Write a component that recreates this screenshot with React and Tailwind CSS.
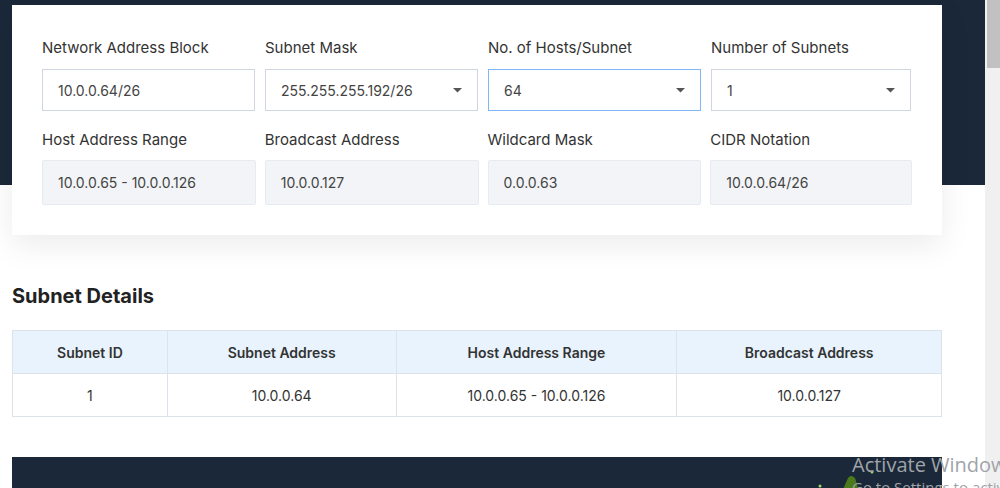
import React from 'react';

const Caret = () => (
  <svg width="9" height="5" viewBox="0 0 9 5" className="shrink-0">
    <path d="M0 0h9L4.5 4.5z" fill="#555" />
  </svg>
);

const Field = ({ label, value, kind, w = 'w-[213px]', focus }) => (
  <div className={w}>
    <div className="text-[15px] leading-5 text-[#333] mb-[11px]">{label}</div>
    <div
      className={`h-[42px] flex items-center justify-between px-[15px] bg-white border ${
        focus ? 'border-[#7fb6f5]' : 'border-[#cfd6e0]'
      }`}
    >
      <span className="text-[14px] text-[#444]">{value}</span>
      {kind === 'select' && <Caret />}
    </div>
  </div>
);

const ReadOnly = ({ label, value, w = 'w-[214px]' }) => (
  <div className={w}>
    <div className="text-[15px] leading-5 text-[#333] mb-[10px]">{label}</div>
    <div className="h-[45px] flex items-center px-[15px] bg-[#f2f4f7] border border-[#e6ebf2] rounded-[2px]">
      <span className="text-[14px] text-[#444]">{value}</span>
    </div>
  </div>
);

const cols = ['w-[155px]', 'w-[229px]', 'w-[281px]', 'w-[265px]'];

export default function App() {
  return (
    <div
      className="relative flex h-[488px] w-[1000px] overflow-hidden"
      style={{ fontFamily: 'Inter, "Noto Sans", sans-serif' }}
    >
      <div className="flex-1 bg-[linear-gradient(to_bottom,#1a2839_0,#1a2839_185px,#ffffff_185px)] pt-[5px]">
        {/* calculator card */}
        <div className="ml-3 w-[930px] bg-white px-[30px] pt-[33px] pb-[30px] shadow-[0_10px_30px_rgba(0,0,0,0.08)]">
          <div className="flex gap-[10px]">
            <Field label="Network Address Block" value="10.0.0.64/26" />
            <Field label="Subnet Mask" value="255.255.255.192/26" kind="select" />
            <Field label="No. of Hosts/Subnet" value="64" kind="select" focus />
            <Field label="Number of Subnets" value="1" kind="select" w="w-[200px]" />
          </div>
          <div className="flex gap-[9px] mt-[19px]">
            <ReadOnly label="Host Address Range" value="10.0.0.65 - 10.0.0.126" />
            <ReadOnly label="Broadcast Address" value="10.0.0.127" />
            <ReadOnly label="Wildcard Mask" value="0.0.0.63" />
            <ReadOnly label="CIDR Notation" value="10.0.0.64/26" w="w-[202px]" />
          </div>
        </div>

        {/* subnet details */}
        <h2 className="ml-3 mt-[49px] text-[20px] leading-6 font-bold text-[#222]">Subnet Details</h2>
        <table className="ml-3 mt-[22px] w-[930px] border-collapse text-[14px] text-center">
          <thead>
            <tr className="bg-[#e9f3fe] h-[43px]">
              {['Subnet ID', 'Subnet Address', 'Host Address Range', 'Broadcast Address'].map((h, i) => (
                <th key={h} className={`${cols[i]} border border-[#dde3ea] font-semibold text-[#333]`}>
                  {h}
                </th>
              ))}
            </tr>
          </thead>
          <tbody>
            <tr className="h-[43px]">
              {['1', '10.0.0.64', '10.0.0.65 - 10.0.0.126', '10.0.0.127'].map((c, i) => (
                <td key={i} className={`${cols[i]} border border-[#dde3ea] text-[#333]`}>
                  {c}
                </td>
              ))}
            </tr>
          </tbody>
        </table>

        {/* footer band */}
        <div className="ml-3 mt-[40px] w-[930px] h-[40px] bg-[#1a2839] relative overflow-hidden">
          <svg className="absolute left-[806px] top-[12px]" width="56" height="32" viewBox="0 0 56 32">
            <circle cx="2" cy="17" r="1.5" fill="#9fd46b" />
            <circle cx="54" cy="3" r="1.5" fill="#9fd46b" />
            <path d="M20 32 L30 9 Q33 5 37 9 L44 32 Z" fill="#4a7a1a" />
          </svg>
        </div>
      </div>

      {/* scrollbar */}
      <div className="w-[15px] bg-[#f0f0f0]">
        <div className="ml-[2px] w-[13px] h-[68px] bg-[#c1c1c1]" />
      </div>

      {/* windows watermark */}
      <div
        className="absolute left-[852px] top-[452px] whitespace-nowrap text-[#a0a4a8]"
        style={{ fontFamily: '"Open Sans", sans-serif' }}
      >
        <div className="text-[20px] leading-[26px]">Activate Windows</div>
        <div className="text-[15px] leading-[18px]">Go to Settings to activate Windows.</div>
      </div>
    </div>
  );
}
